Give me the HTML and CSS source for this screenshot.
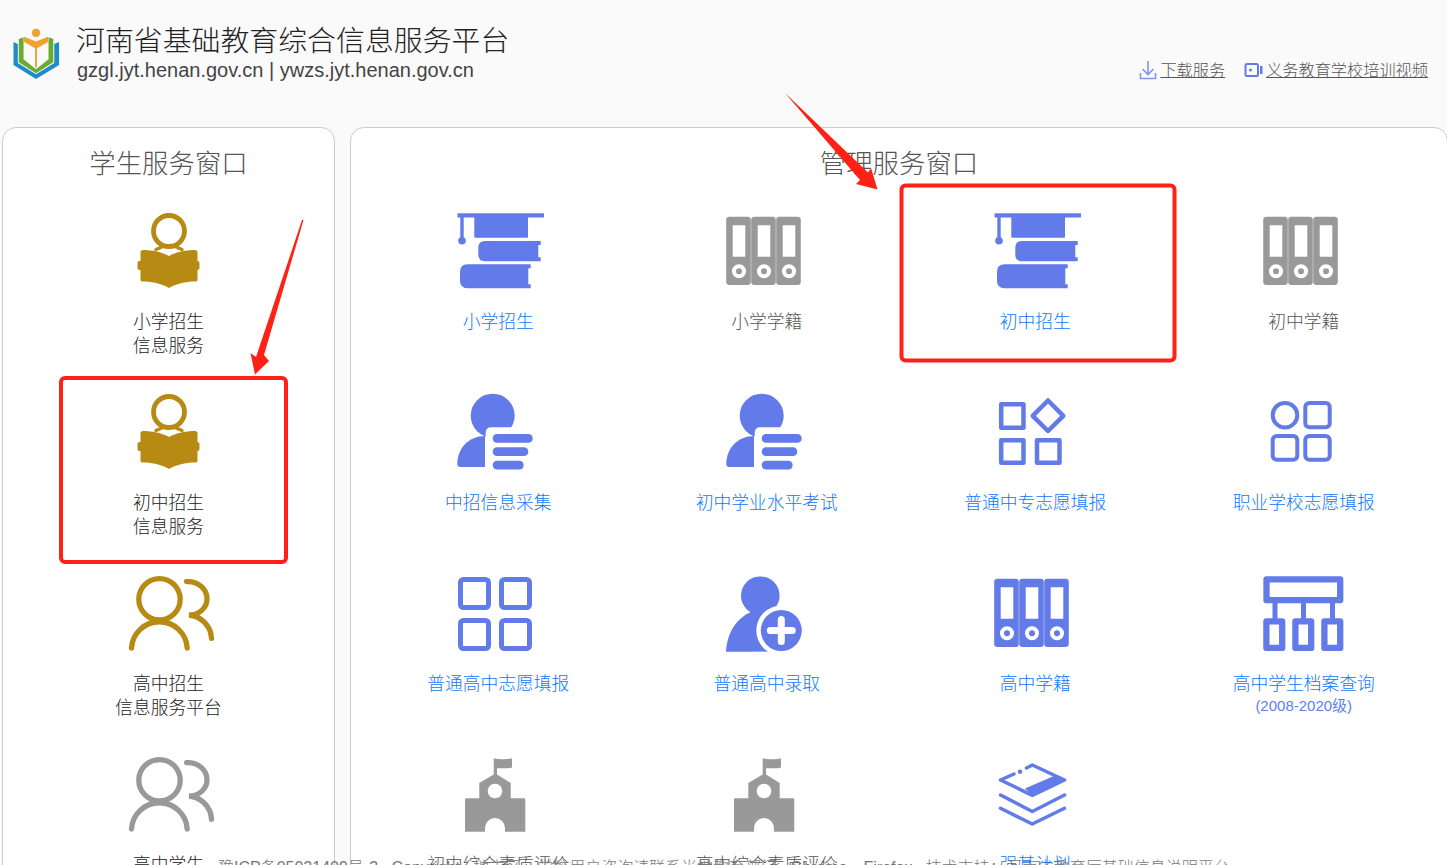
FILE: index.html
```html
<!DOCTYPE html>
<html lang="zh-CN">
<head>
    <meta charset="UTF-8">
    <meta name="viewport" content="width=device-width, initial-scale=1.0">
    <title>河南省基础教育综合信息服务平台</title>
    <link rel="stylesheet" href="styles.css">
</head>
<body>
    <svg class="icon-defs" aria-hidden="true">
        <symbol id="i-reader" viewBox="0 0 100 80">
            <circle cx="50" cy="21" r="15.500" fill="none" stroke="currentColor" stroke-width="4.800"/>
            <path d="M37 39.500l7-3M63 39.500l-7-3" fill="none" stroke="currentColor" stroke-width="3.400" stroke-linecap="round"/>
            <path d="M21.500 41.500Q22 40 24 40C33 40 43 42 50 46C57 42 67 40 76 40Q78 40 78.500 41.500V70Q78.500 71.500 76 71.500C66 71.500 57 74 50 78C43 74 34 71.500 24 71.500Q21.500 71.500 21.500 70Z"/>
            <rect x="18.500" y="51" width="62" height="9" rx="2"/>
        </symbol>
        <symbol id="i-users" viewBox="0 0 100 80">
            <g fill="none" stroke="currentColor" stroke-width="5.300" stroke-linecap="round">
                <circle cx="40.500" cy="27.300" r="20.700"/>
                <path d="M12.500 76A27.900 27.900 0 0 1 68.200 76"/>
                <path d="M67.500 9.700C79 9 88 17 88 27C88 36 80 43 70 43C82 44 92 54 92.500 66.300"/>
            </g>
        </symbol>
        <symbol id="i-cap" viewBox="0 0 100 80">
            <rect x="9.500" y="3.300" width="86.500" height="4.200"/>
            <rect x="12.300" y="6" width="3.400" height="24"/>
            <circle cx="14" cy="30.700" r="3.800"/>
            <path d="M26.300 7H80V26.700Q80 27.700 79 27.700H27.300Q26.300 27.700 26.300 26.700Z"/>
            <path d="M37 31H92.700V35H90.300V47.300H92.700V51.300H37Q30.300 51.300 30.300 44.500V37.800Q30.300 31 37 31Z"/>
            <path d="M19.500 54.300H82.700V58.300H80.300V74.300H82.700V78.300H19.500Q12 78.300 12 70.800V61.800Q12 54.300 19.500 54.300Z"/>
        </symbol>
        <symbol id="i-folders" viewBox="0 0 100 80">
            <g id="folder-one">
                <path fill-rule="evenodd" d="M12.500 6.700H30.500Q33.800 6.700 33.800 10V71.700Q33.800 75 30.500 75H12.500Q9.200 75 9.200 71.700V10Q9.200 6.700 12.500 6.700ZM15.700 15.300V46.700H28.300V15.300ZM22 54.300A7 7 0 1 0 22 68.300A7 7 0 1 0 22 54.300ZM22 58.300A3 3 0 1 1 22 64.300A3 3 0 1 1 22 58.300Z"/>
            </g>
            <use href="#folder-one" x="25"/>
            <use href="#folder-one" x="50"/>
        </symbol>
        <symbol id="i-person-list" viewBox="0 0 100 80">
            <circle cx="44.700" cy="24.700" r="22"/>
            <path d="M9.300 73V73C9.300 57 21 45 37 45V76H12.300Q9.300 76 9.300 73Z"/>
            <rect x="37.700" y="36.300" width="60" height="44" rx="5" fill="#fff"/>
            <rect x="44.700" y="43" width="40" height="8.700" rx="4.300"/>
            <rect x="44.700" y="56.300" width="35.600" height="8.700" rx="4.300"/>
            <rect x="44.700" y="69.700" width="31" height="8.700" rx="4.300"/>
        </symbol>
        <symbol id="i-shapes" viewBox="0 0 100 80">
            <g fill="none" stroke="currentColor" stroke-width="4.500" stroke-linejoin="round">
                <rect x="16.200" y="13.200" width="22.300" height="23.600"/>
                <path d="M63 9.500L78.300 24.800L63 40L47.700 24.800Z"/>
                <rect x="16.200" y="49.200" width="22.300" height="22.600"/>
                <rect x="52" y="49.200" width="22.500" height="22.600"/>
            </g>
        </symbol>
        <symbol id="i-apps" viewBox="0 0 100 80">
            <g fill="none" stroke="currentColor" stroke-width="4">
                <circle cx="31" cy="24.200" r="12.300"/>
                <rect x="51.300" y="12" width="24.400" height="24.300" rx="4"/>
                <rect x="18.700" y="45" width="24.600" height="23.700" rx="4"/>
                <rect x="51.300" y="45" width="24.400" height="23.700" rx="4"/>
            </g>
        </symbol>
        <symbol id="i-grid" viewBox="0 0 100 80">
            <g fill="none" stroke="currentColor" stroke-width="5">
                <rect x="12.500" y="7.500" width="28" height="28" rx="3"/>
                <rect x="53.500" y="7.500" width="28" height="28" rx="3"/>
                <rect x="12.500" y="48.500" width="28" height="28" rx="3"/>
                <rect x="53.500" y="48.500" width="28" height="28" rx="3"/>
            </g>
        </symbol>
        <symbol id="i-person-add" viewBox="0 0 100 80">
            <circle cx="43.300" cy="23.700" r="19.300"/>
            <path d="M9 79.700C10 60 20 46 34 40L60 36L72 79.700Z"/>
            <circle cx="64.300" cy="58.500" r="25" fill="#fff"/>
            <rect x="36" y="79.800" width="30" height="3" fill="#fff"/>
            <circle cx="64.300" cy="58.500" r="20.500"/>
            <path d="M64.300 47.500V69.500M53.300 58.500H75.300" fill="none" stroke="#fff" stroke-width="7" stroke-linecap="round"/>
        </symbol>
        <symbol id="i-archive" viewBox="0 0 100 80">
            <g fill="none" stroke="currentColor" stroke-width="6.300" stroke-linejoin="round">
                <rect x="12.500" y="7.300" width="73.700" height="20.900"/>
                <rect x="12.400" y="49.400" width="15.800" height="26.500"/>
                <rect x="41.400" y="49.400" width="15.800" height="26.500"/>
                <rect x="70.400" y="49.400" width="15.800" height="26.500"/>
                <path d="M21 30V47M49.500 30V47M78.500 30V47" stroke-width="5"/>
            </g>
        </symbol>
        <symbol id="i-school" viewBox="0 0 100 80">
            <path d="M45.700 5.300C50 6.300 59 6.800 64 5.300V14.500C59 15.800 53 15 49 15.300V21.500L62.700 30V45.300H76Q77.300 45.300 77.300 46.600V78.700H57V75A10 10 0 0 0 37 75V78.700H17V46.600Q17 45.300 18.300 45.300H31.300V30L45.700 21.500Z"/>
            <circle cx="47" cy="38" r="7.300" fill="#fff"/>
        </symbol>
        <symbol id="i-layers" viewBox="0 0 100 80">
            <g fill="none" stroke="currentColor" stroke-width="3.500" stroke-linecap="round" stroke-linejoin="round">
                <path d="M15.500 55.300L47.300 71L79.500 55.300"/>
                <path d="M15.500 42L47.300 58.500L79.500 42"/>
                <path d="M29 21L15.500 27L47.300 42.300L79.500 27L47.300 12L41.500 15"/>
            </g>
            <circle cx="35" cy="18.700" r="2.300"/>
            <path d="M40 35.500L70 22.500L80 27L47.300 42.300Z"/>
        </symbol>
    </svg>

    <header class="top">
        <div class="brand">
            <svg class="logo" viewBox="0 0 50 56">
                <path fill="#1f8bc9" d="M.5 15.500L5 17.500V37.500L24 49L43 37.500V17.500L48 15.500V39.500L24 54L.5 39.500Z"/>
                <path fill="#6bab2f" d="M6 12.500L11 10.500V33.500L24 44L37 33.500V10.500L42 12.500V36.500L24 48L6 36.500Z"/>
                <circle cx="24" cy="6" r="4.200" fill="#f0a12f"/>
                <path fill="#f0a12f" d="M11.500 10L24 15L36.500 10V15.500L25 22V42H23V22L11.500 15.500Z"/>
            </svg>
            <div class="brand-text">
                <h1>河南省基础教育综合信息服务平台</h1>
                <p>gzgl.jyt.henan.gov.cn | ywzs.jyt.henan.gov.cn</p>
            </div>
        </div>
        <nav class="top-links">
            <a href="#">
                <svg class="link-icon thin" viewBox="0 0 18 20"><path d="M9 1V14M3.500 9L9 14.500L14.500 9M1.500 13V18.500H16.500V13" fill="none" stroke="currentColor" stroke-width="1.600"/></svg>
                <span>下载服务</span>
            </a>
            <a href="#">
                <svg class="link-icon" viewBox="0 0 18 14"><path d="M1 2.500Q1 1 2.500 1H12Q13.500 1 13.500 2.500V11.500Q13.500 13 12 13H2.500Q1 13 1 11.500Z" fill="none" stroke="currentColor" stroke-width="2"/><circle cx="6" cy="7" r="1.500"/><rect x="15.500" y="3" width="2.500" height="8"/></svg>
                <span>义务教育学校培训视频</span>
            </a>
        </nav>
    </header>

    <main class="panels">
        <section class="panel">
            <h2>学生服务窗口</h2>
            <div class="items">
                <a class="item gold" href="#"><svg class="ico"><use href="#i-reader"/></svg><span>小学招生<br>信息服务</span></a>
                <a class="item gold" href="#"><svg class="ico"><use href="#i-reader"/></svg><span>初中招生<br>信息服务</span></a>
                <a class="item gold" href="#"><svg class="ico"><use href="#i-users"/></svg><span>高中招生<br>信息服务平台</span></a>
                <a class="item grey" href="#"><svg class="ico"><use href="#i-users"/></svg><span>高中学生<br>学籍信息</span></a>
            </div>
        </section>
        <section class="panel">
            <h2>管理服务窗口</h2>
            <div class="items four">
                <a class="item blue" href="#"><svg class="ico"><use href="#i-cap"/></svg><span>小学招生</span></a>
                <a class="item off" href="#"><svg class="ico"><use href="#i-folders"/></svg><span>小学学籍</span></a>
                <a class="item blue" href="#"><svg class="ico"><use href="#i-cap"/></svg><span>初中招生</span></a>
                <a class="item off" href="#"><svg class="ico"><use href="#i-folders"/></svg><span>初中学籍</span></a>

                <a class="item blue" href="#"><svg class="ico"><use href="#i-person-list"/></svg><span>中招信息采集</span></a>
                <a class="item blue" href="#"><svg class="ico"><use href="#i-person-list"/></svg><span>初中学业水平考试</span></a>
                <a class="item blue" href="#"><svg class="ico"><use href="#i-shapes"/></svg><span>普通中专志愿填报</span></a>
                <a class="item blue" href="#"><svg class="ico"><use href="#i-apps"/></svg><span>职业学校志愿填报</span></a>

                <a class="item blue" href="#"><svg class="ico"><use href="#i-grid"/></svg><span>普通高中志愿填报</span></a>
                <a class="item blue" href="#"><svg class="ico"><use href="#i-person-add"/></svg><span>普通高中录取</span></a>
                <a class="item blue" href="#"><svg class="ico"><use href="#i-folders"/></svg><span>高中学籍</span></a>
                <a class="item blue" href="#"><svg class="ico"><use href="#i-archive"/></svg><span>高中学生档案查询</span><small>(2008-2020级)</small></a>

                <a class="item off" href="#"><svg class="ico"><use href="#i-school"/></svg><span>初中综合素质评价</span></a>
                <a class="item off" href="#"><svg class="ico"><use href="#i-school"/></svg><span>高中综合素质评价</span></a>
                <a class="item blue" href="#"><svg class="ico"><use href="#i-layers"/></svg><span>强基计划</span></a>
            </div>
        </section>
    </main>

    <footer class="foot">豫ICP备05021409号-3 &nbsp; Copyright &nbsp; 地市区、学校用户咨询请联系当地教育部门 &nbsp; Chrome、Firefox &nbsp; 技术支持：河南省教育厅基础信息说明平台</footer>

    <svg class="marks" viewBox="0 0 1447 865" aria-hidden="true">
        <rect x="61" y="378" width="225" height="184" rx="4"/>
        <rect x="901.500" y="185.500" width="273" height="175" rx="4"/>
        <path class="arrow" d="M303.500 220L264 355L269 361L255 374.500L250.500 353L256 357L302 220Z"/>
        <path class="arrow" d="M785 93L868 172.500L871 168L877.500 189.500L856 184L860 180Z"/>
    </svg>
</body>
</html>
```

FILE: styles.css
```css
html, body {
    height: 865px;
    overflow: hidden;
}
body {
    position: relative;
    margin: 0;
    background: #fafafa;
    color: #222;
    font-family: "Liberation Sans", "Noto Sans CJK SC", sans-serif;
    font-weight: 300;
}
a {
    text-decoration: none;
    color: inherit;
}
.icon-defs {
    display: none;
}

/* header */
.top {
    display: flex;
    justify-content: space-between;
    height: 127px;
    padding: 0 19px 0 13px;
    box-sizing: border-box;
}
.brand {
    display: flex;
    gap: 15px;
    padding-top: 24px;
}
.logo {
    width: 48px;
    height: 54px;
    margin-top: 3px;
}
.brand-text h1 {
    margin: 0;
    font-size: 28.9px;
    line-height: 34px;
    font-weight: 300;
    white-space: nowrap;
}
.brand-text p {
    margin: 0;
    padding-left: 1px;
    font-size: 20px;
    line-height: 24px;
    color: #444;
    font-weight: 400;
    white-space: nowrap;
}
.top-links {
    display: flex;
    gap: 19px;
    padding-top: 57.500px;
    font-size: 16.2px;
    line-height: 24px;
    color: #555;
}
.top-links a {
    display: flex;
    align-items: center;
    gap: 3px;
    height: 24px;
}
.top-links span {
    text-decoration: underline;
}
.link-icon {
    width: 19px;
    height: 14px;
    fill: #627be8;
    color: #627be8;
}
.link-icon.thin {
    width: 18px;
    height: 20px;
    color: #7d97f2;
}

/* panels */
.panels {
    display: grid;
    grid-template-columns: 333px 1098px;
    column-gap: 15px;
    padding-left: 2px;
}
.panel {
    height: 760px;
    background: #fff;
    border: 1px solid #ccc;
    border-radius: 14px;
    box-sizing: border-box;
}
.panel h2 {
    margin: 0;
    padding-top: 18px;
    font-size: 26.4px;
    line-height: 36px;
    font-weight: 300;
    text-align: center;
    color: #555;
}
.items {
    display: grid;
    grid-auto-rows: 181px;
    padding-top: 28px;
}
.items.four {
    grid-template-columns: repeat(4, 1fr);
    padding: 28px 9px 0 13px;
}
.item {
    display: flex;
    flex-direction: column;
    align-items: center;
    font-size: 17.75px;
    line-height: 24px;
    text-align: center;
}
.ico {
    width: 100px;
    height: 80px;
    margin-bottom: 20px;
    flex: none;
    fill: currentColor;
}
.item small {
    font-size: 15px;
    line-height: 20px;
    color: #5b7fee;
    font-weight: 400;
}
.item.gold .ico { color: #b78a13; }
.item.grey .ico { color: #999; }
.item.blue { color: #0f77ff; }
.item.blue .ico { color: #627be8; }
.item.off { color: #555; }
.item.off .ico { color: #999; }

/* text that runs under the window edge */
.foot {
    position: absolute;
    left: 218px;
    top: 856px;
    font-size: 16px;
    line-height: 24px;
    color: #777;
    white-space: nowrap;
}

/* red marks drawn on the shot */
.marks {
    position: absolute;
    left: 0;
    top: 0;
    width: 1447px;
    height: 865px;
    pointer-events: none;
    fill: none;
    stroke: #ff2116;
    stroke-width: 4;
}
.marks .arrow {
    fill: #ff2116;
    stroke: none;
}
```
